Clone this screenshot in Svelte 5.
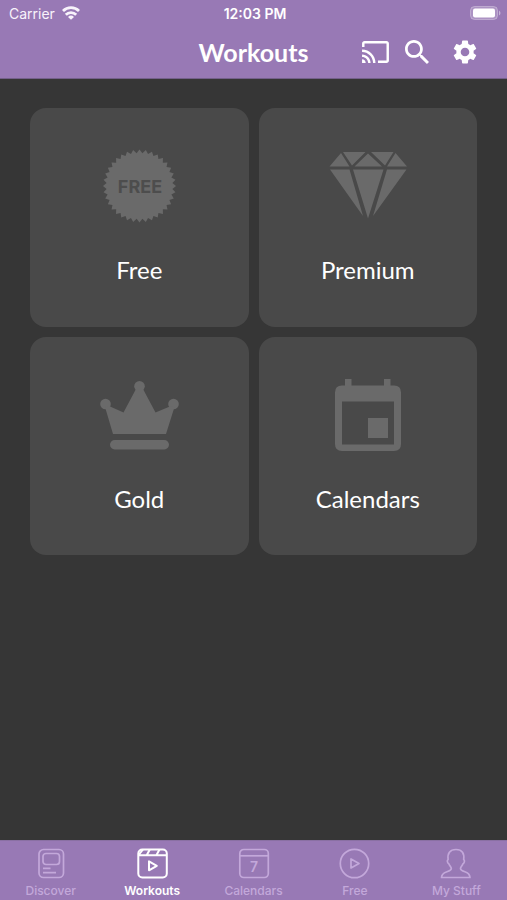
<script lang="ts">
interface Item {
  id: string;
  label: string;
}

const tiles: Item[] = [
  { id: 'free', label: 'Free' },
  { id: 'premium', label: 'Premium' },
  { id: 'gold', label: 'Gold' },
  { id: 'calendars', label: 'Calendars' },
];

const tabs: Item[] = [
  { id: 'discover', label: 'Discover' },
  { id: 'workouts', label: 'Workouts' },
  { id: 'calendars', label: 'Calendars' },
  { id: 'free', label: 'Free' },
  { id: 'stuff', label: 'My Stuff' },
];

let active = $state('workouts');

// serrated edge of the "free" seal
function sealPoints(teeth: number, outer: number, inner: number) {
  const points: string[] = [];
  for (let i = 0; i < teeth * 2; i++) {
    const r = i % 2 ? inner : outer;
    const a = (i * Math.PI) / teeth;
    points.push(`${(40.5 + r * Math.sin(a)).toFixed(2)},${(40 - r * Math.cos(a)).toFixed(2)}`);
  }
  return points.join(' ');
}
</script>

<div class="app">
  <header class="header">
    <div class="status">
      <div class="carrier">
        <span>Carrier</span>
        <svg width="18" height="14" viewBox="0 0 18 14" aria-hidden="true">
          <g fill="none" stroke="currentColor" stroke-width="2.8">
            <path d="M1 5a11.4 11.4 0 0 1 16 0" />
            <path d="M3.8 8.7a7.4 7.4 0 0 1 10.400 0" />
          </g>
          <path d="M9 13.800L6 10.900a4.300 4.300 0 0 1 6 0z" fill="currentColor" />
        </svg>
      </div>
      <span class="time">12:03 PM</span>
      <svg class="battery" width="31" height="14" viewBox="0 0 31 14" aria-hidden="true">
        <rect x="0.5" y="0.5" width="27" height="13" rx="4" fill="#fff" fill-opacity="0.2" stroke="#fff" stroke-opacity="0.3" />
        <rect x="3" y="2.5" width="22" height="9" rx="2" fill="#fff" />
        <path d="M29 4.5q1.5 1 1.5 2.5T29 9.5z" fill="#fff" fill-opacity="0.45" />
      </svg>
    </div>
    <div class="toolbar">
      <h1 class="title">Workouts</h1>
      <div class="actions">
        <button class="action" aria-label="Cast">
          <svg width="27" height="22" viewBox="1 3 22 18" fill="currentColor">
            <path d="M21 3H3c-1.1 0-2 .9-2 2v3h2V5h18v14h-7v2h7c1.1 0 2-.9 2-2V5c0-1.1-.9-2-2-2zM1 18v3h3c0-1.66-1.34-3-3-3zm0-4v2c2.76 0 5 2.24 5 5h2c0-3.87-3.13-7-7-7zm0-4v2c4.97 0 9 4.03 9 9h2c0-6.08-4.93-11-11-11z" />
          </svg>
        </button>
        <button class="action" aria-label="Search">
          <svg width="24" height="24" viewBox="3 3 17.5 17.5" fill="currentColor">
            <path d="M15.5 14h-.79l-.28-.27C15.41 12.59 16 11.11 16 9.5 16 5.91 13.09 3 9.5 3S3 5.91 3 9.5 5.91 16 9.5 16c1.61 0 3.09-.59 4.23-1.57l.27.28v.79l5 4.99L20.49 19l-4.99-5zm-6 0C7.01 14 5 11.99 5 9.5S7.01 5 9.5 5 14 7.01 14 9.5 11.99 14 9.5 14z" />
          </svg>
        </button>
        <button class="action settings" aria-label="Settings">
          <svg width="24" height="24" viewBox="2 2 20 20" fill="currentColor">
            <path d="M19.14 12.94c.04-.3.06-.61.06-.94 0-.32-.02-.64-.07-.94l2.03-1.58c.18-.14.23-.41.12-.61l-1.92-3.32c-.12-.22-.37-.29-.59-.22l-2.39.96c-.5-.38-1.03-.7-1.62-.94l-.36-2.54c-.04-.24-.24-.41-.48-.41h-3.84c-.24 0-.43.17-.47.41l-.36 2.54c-.59.24-1.13.57-1.62.94l-2.39-.96c-.22-.08-.47 0-.59.22L2.74 8.87c-.12.21-.08.47.12.61l2.03 1.58c-.05.3-.09.63-.09.94s.02.64.07.94l-2.03 1.58c-.18.14-.23.41-.12.61l1.92 3.32c.12.22.37.29.59.22l2.39-.96c.5.38 1.03.7 1.62.94l.36 2.54c.05.24.24.41.48.41h3.84c.24 0 .44-.17.47-.41l.36-2.54c.59-.24 1.13-.56 1.62-.94l2.39.96c.22.08.47 0 .59-.22l1.92-3.32c.12-.22.07-.47-.12-.61l-2.01-1.58zM12 15.6c-1.98 0-3.6-1.62-3.6-3.6s1.62-3.6 3.6-3.6 3.6 1.62 3.6 3.6-1.62 3.6-3.6 3.6z" />
          </svg>
        </button>
      </div>
    </div>
  </header>

  <main class="grid">
    {#each tiles as tile}
      <button class="tile">
        <svg class="tile-icon" viewBox="0 0 80 80" fill="currentColor" aria-hidden="true">
          {#if tile.id === 'free'}
            <polygon points={sealPoints(36, 36.5, 33)} />
            <text class="seal-text" x="41" y="47" text-anchor="middle">FREE</text>
          {:else if tile.id === 'premium'}
            <path d="M13 7L1.5 20.5h20zM15 6h22.5L24 19.5zM40 7.5l-13.5 13H54zM43 6h22.5L57 19.5zM67.5 7L79 20.5H59z" />
            <path d="M2 23.5h19.5L35 70zM25 23.5h30.5L40 72.5zM59 23.5h19.5L45 70z" />
          {:else if tile.id === 'gold'}
            <circle cx="40.5" cy="11.2" r="5.3" />
            <circle cx="6.5" cy="29" r="5.3" />
            <circle cx="74.5" cy="29" r="5.3" />
            <path d="M37 14h7l12.5 23.5L72 31l3.5 1L67 59H14L6 32l4-1 14.5 6.5z" />
            <rect x="11" y="65" width="59" height="9.5" rx="4.7" />
          {:else}
            <path d="M17 4h6.5v6.5H56V4h6.500v6.500h3.500q7 0 7 7v51.500q0 7-7 7H14q-7 0-7-7V17.500q0-7 7-7h3zM14 26.500v43h52v-43z" fill-rule="evenodd" />
            <rect x="40" y="43" width="20" height="20" />
          {/if}
        </svg>
        <span class="tile-label">{tile.label}</span>
      </button>
    {/each}
  </main>

  <nav class="tabs">
    {#each tabs as tab}
      <button
        class="tab"
        class:active={active === tab.id}
        aria-current={active === tab.id ? 'page' : undefined}
        onclick={() => (active = tab.id)}
      >
        <svg class="tab-icon" viewBox="0 0 32 32" aria-hidden="true">
          {#if tab.id === 'discover'}
            <rect x="4" y="2.5" width="24.5" height="28" rx="4.5" />
            <rect x="8" y="6.5" width="16.5" height="11" rx="3" />
            <path d="M8 21.3h7.500M8 25.700h13" />
          {:else if tab.id === 'workouts'}
            <rect x="2.3" y="2.5" width="28.5" height="28" rx="4" />
            <path d="M2.5 8.3h28M3 7.500l4-5M10.800 8l3-5.500M20.500 8l3-5.500M13 14.300v9l7.800-4.500z" />
          {:else if tab.id === 'calendars'}
            <rect x="1.8" y="2.5" width="28.5" height="28" rx="4" />
            <path d="M2 8.8h28" />
            <text class="day" x="16" y="25" text-anchor="middle">7</text>
          {:else if tab.id === 'free'}
            <circle cx="15.5" cy="16.5" r="14.2" />
            <path d="M12 12v9l8-4.500z" />
          {:else}
            <path d="M1.500 30.500h28.500c-.3-3-1.500-4.500-4.500-5.500-3-1-5-1.500-5-3.500 0-1.500 1.700-2.500 2.500-4.800 1.500-.4 2-3.500.7-4.200.8-6-1.500-10-7.700-10s-8.700 4-7.900 10c-1.300.7-.8 3.800.7 4.200.8 2.300 2.500 3.300 2.500 4.800 0 2-2 2.500-5 3.500-3 1-4.500 2.500-4.800 5.500z" />
          {/if}
        </svg>
        <span>{tab.label}</span>
      </button>
    {/each}
  </nav>
</div>

<style>
  :global(body) {
    margin: 0;
    background: #363636;
  }

  .app {
    display: flex;
    flex-direction: column;
    min-height: 100vh;
    background: #363636;
    color: #fff;
    font-family: Inter, 'Liberation Sans', sans-serif;
  }

  button {
    border: 0;
    padding: 0;
    background: none;
    color: inherit;
    font: inherit;
    cursor: pointer;
  }

  svg {
    display: block;
  }

  .header {
    background: #9879b5;
    border-bottom: 1px solid #74608a;
  }

  .status {
    display: grid;
    grid-template-columns: 1fr auto 1fr;
    align-items: center;
    height: 26px;
    padding: 0 6px 0 9px;
    font-size: 14px;
  }

  .carrier {
    display: flex;
    align-items: center;
    gap: 7px;
    color: #f8f3fb;
  }

  .time {
    font-weight: 600;
  }

  .battery {
    justify-self: end;
  }

  .toolbar {
    display: grid;
    grid-template-columns: 1fr auto 1fr;
    align-items: center;
    height: 52px;
    padding: 0 30px;
  }

  .title {
    grid-column: 2;
    margin: 0;
    font-family: Lato, sans-serif;
    font-size: 25px;
    line-height: 32px;
    font-weight: 700;
  }

  .actions {
    display: flex;
    align-items: center;
    justify-content: flex-end;
    gap: 16px;
  }

  .settings {
    margin-left: 8px;
  }

  .grid {
    flex: 1;
    display: grid;
    grid-template-columns: 1fr 1fr;
    align-content: start;
    gap: 10px;
    padding: 29px 30px;
  }

  .tile {
    display: flex;
    flex-direction: column;
    align-items: center;
    gap: 28px;
    aspect-ratio: 1;
    padding-top: 38px;
    border-radius: 16px;
    background: #494949;
  }

  .tile-icon {
    width: 80px;
    height: 80px;
    color: #6a6a6a;
  }

  .tile-label {
    font-family: Lato, sans-serif;
    font-size: 24px;
    line-height: 32px;
  }

  .seal-text {
    fill: #4d4d4d;
    font-size: 18px;
    font-weight: 700;
  }

  .tabs {
    display: flex;
    background: #9879b5;
    border-top: 1px solid #8a70a3;
  }

  .tab {
    flex: 1;
    display: flex;
    flex-direction: column;
    align-items: center;
    gap: 4px;
    padding: 6px 0 1px;
    color: #c3a8da;
    font-size: 12px;
    line-height: 16px;
    font-weight: 500;
  }

  .tab.active {
    color: #fff;
    font-weight: 600;
  }

  .tab-icon {
    width: 32px;
    height: 32px;
    fill: none;
    stroke: currentColor;
    stroke-width: 1.7;
    stroke-linejoin: round;
  }

  .active .tab-icon {
    stroke-width: 2;
  }

  .day {
    fill: currentColor;
    stroke: none;
    font-size: 14px;
    font-weight: 600;
  }
</style>
